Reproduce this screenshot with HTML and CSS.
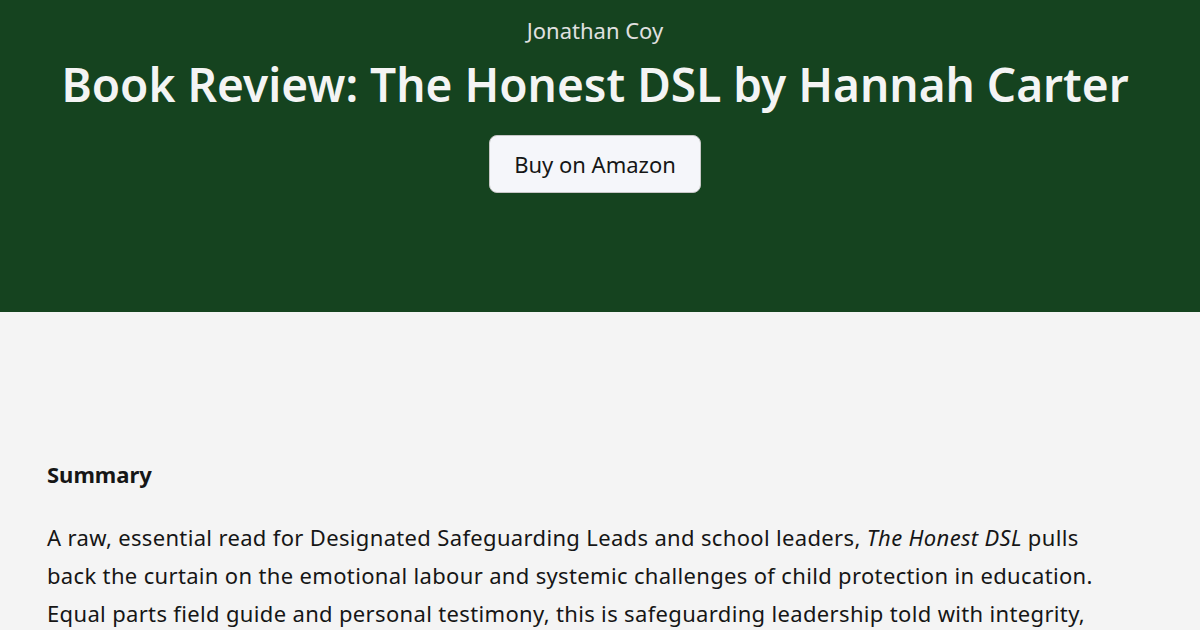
FILE: index.html
```html
<!DOCTYPE html>
<html lang="en">
<head>
    <meta charset="UTF-8">
    <meta name="viewport" content="width=device-width, initial-scale=1.0">
    <title>Book Review: The Honest DSL by Hannah Carter</title>
    <link rel="stylesheet" href="styles.css">
</head>
<body>
    <!-- Hero -->
    <header class="hero">
        <p class="author">Jonathan Coy</p>
        <h1>Book Review: The Honest DSL by Hannah Carter</h1>
        <a class="buy-button" href="#">Buy on Amazon</a>
    </header>

    <!-- Review body -->
    <main class="review">
        <h2>Summary</h2>
        <p>A raw, essential read for Designated Safeguarding Leads and school leaders, <em>The Honest DSL</em> pulls back the curtain on the emotional labour and systemic challenges of child protection in education. Equal parts field guide and personal testimony, this is safeguarding leadership told with integrity, honesty and care.</p>
    </main>
</body>
</html>
```

FILE: styles.css
```css
body {
    font-family: "Noto Sans", sans-serif;
    background-color: #f4f4f4;
    color: #161616;
    margin: 0;
    padding: 0;
}

/* Hero header */
.hero {
    background-color: #15431f;
    color: #f4f4f4;
    text-align: center;
    height: 312px;
    box-sizing: border-box;
    padding: 16px 10px 0 0;
}

.hero .author {
    margin: 0;
    font-size: 22px;
    line-height: 28px;
    color: #e0e0e0;
}

.hero h1 {
    margin: 12px 0 0;
    font-size: 46px;
    line-height: 56px;
    font-weight: 600;
}

.buy-button {
    display: inline-block;
    margin-top: 23px;
    padding: 0 24px;
    height: 58px;
    line-height: 56px;
    box-sizing: border-box;
    background-color: #f5f6fa;
    border: 1px solid #c6c6c6;
    border-radius: 8px;
    color: #161616;
    font-size: 22px;
    text-decoration: none;
}

/* Review text */
.review {
    padding: 148px 80px 0 47px;
}

.review h2 {
    margin: 0;
    font-size: 22px;
    line-height: 28px;
    font-weight: 700;
}

.review p {
    margin: 30px 0 0;
    font-size: 22px;
    line-height: 38px;
    letter-spacing: 0.34px;
}
```
